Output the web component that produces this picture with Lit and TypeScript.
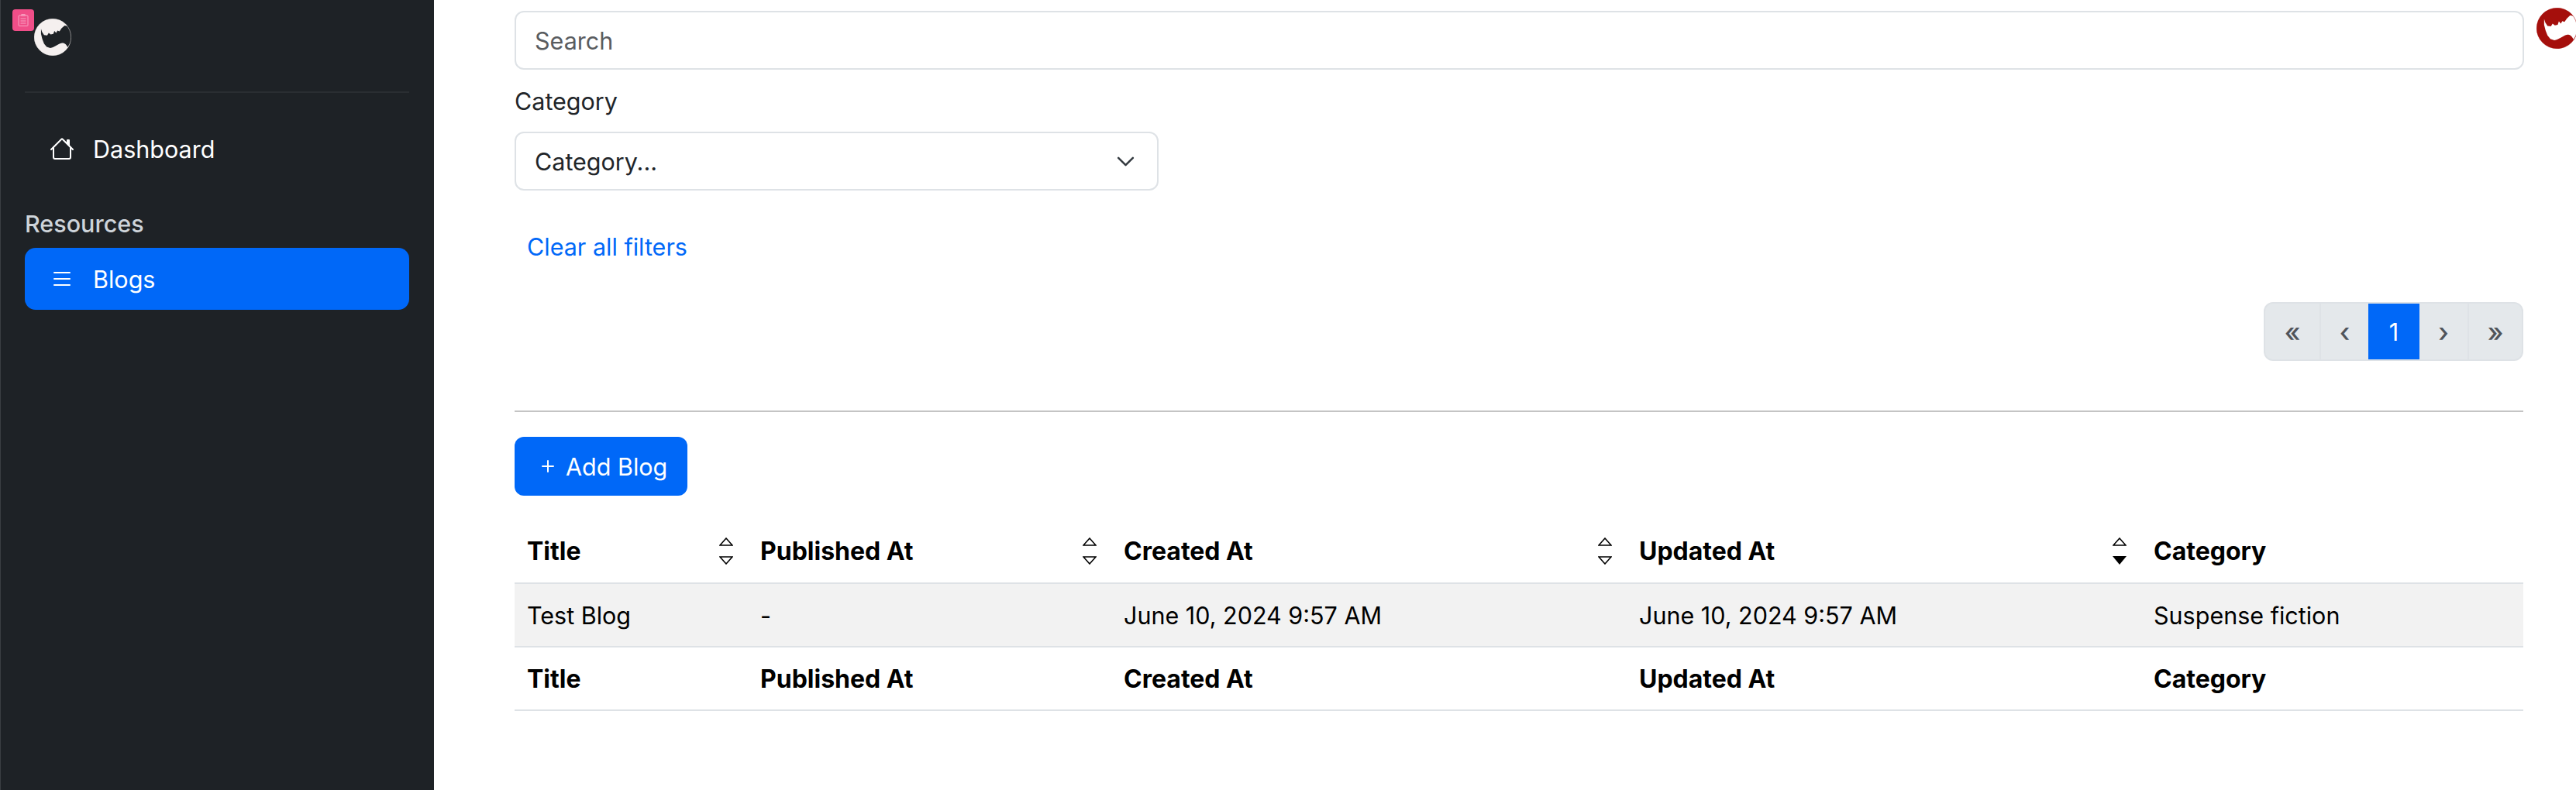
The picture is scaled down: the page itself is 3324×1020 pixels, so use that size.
import { LitElement, html, css, svg } from "lit";
import { customElement } from "lit/decorators.js";

const RHINO =
  "M278 112 L266 100 L252 97 L240 108 L232 120 L224 117 L219 126 L212 118 L208 130 L198 132 L190 126 L184 136 L172 134 L164 122 L160 110 L160 130 L165 150 L172 168 L182 180 L196 185 C214 182 226 168 242 165 C252 165 258 170 264 182 L278 160 Z";

const logo = (bg: string, fg: string, size: number) => html`
  <svg width=${size} height=${size} viewBox="133 70 145 145">
    <circle cx="205.5" cy="142.5" r="72" fill=${bg}></circle>
    <path d=${RHINO} fill=${fg}></path>
    <circle cx="205.5" cy="142.5" r="71.5" fill="none" stroke=${bg} stroke-width="1.5"></circle>
  </svg>
`;

const sortIcon = (active = false) => html`
  <svg class="sort" width="18" height="35" viewBox="0 0 18 35">
    <path d="M9 1 L17 10 H1 Z" fill="none" stroke="#000" stroke-width="1.6"></path>
    ${active
      ? svg`<path d="M0 24 H18 L9 35 Z" fill="#000"></path>`
      : svg`<path d="M9 34 L17 25 H1 Z" fill="none" stroke="#000" stroke-width="1.6"></path>`}
  </svg>
`;

const columns = ["Title", "Published At", "Created At", "Updated At", "Category"];
const row = ["Test Blog", "-", "June 10, 2024 9:57 AM", "June 10, 2024 9:57 AM", "Suspense fiction"];

@customElement("app-root")
export class AppRoot extends LitElement {
  static styles = css`
    :host {
      display: flex;
      height: 1020px;
      overflow: hidden;
      background: #fff;
      color: #212529;
      font-family: Inter, "Liberation Sans", sans-serif;
      font-size: 30.5px;
      line-height: 45px;
    }
    .sidebar {
      position: relative;
      box-sizing: border-box;
      flex: none;
      width: 560px;
      padding: 24px 32px 0 31px;
      background: #1e2226;
      border-left: 1px solid #3a3e42;
      color: #fff;
    }
    .badge {
      position: absolute;
      left: 15px;
      top: 12px;
      display: flex;
      align-items: center;
      justify-content: center;
      width: 28px;
      height: 28px;
      border-radius: 4px;
      background: #f04e88;
    }
    .brand {
      height: 94px;
      margin-left: 12px;
      box-sizing: border-box;
    }
    .brand svg {
      display: block;
    }
    .divider {
      height: 2px;
      background: #2a2e32;
    }
    .nav-item {
      display: flex;
      align-items: center;
      gap: 24px;
      height: 80px;
      padding-left: 32px;
      border-radius: 14px;
    }
    .nav-item svg {
      flex: none;
    }
    .nav-item.home {
      margin-top: 32px;
    }
    .nav-item.active {
      background: #0068f8;
    }
    .section {
      margin-top: 34px;
      margin-bottom: 9px;
      color: #ced4da;
      font-weight: 500;
    }
    .main {
      flex: 1;
      min-width: 0;
      padding: 14px 68px 0 104px;
    }
    .search-row {
      display: flex;
      align-items: flex-start;
    }
    .search {
      flex: 1;
      box-sizing: border-box;
      min-width: 0;
      height: 76px;
      padding: 0 24px;
      border: 2px solid #dee2e6;
      border-radius: 12px;
      outline: none;
      color: #212529;
      font: inherit;
    }
    .search::placeholder {
      color: #595c5f;
      opacity: 1;
    }
    .account {
      flex: none;
      width: 53px;
      height: 53px;
      margin: -4px -70px 0 16px;
    }
    .label {
      margin-top: 18px;
      height: 62px;
    }
    .select {
      display: flex;
      align-items: center;
      justify-content: space-between;
      box-sizing: border-box;
      width: 831px;
      height: 76px;
      padding: 0 28px 0 24px;
      border: 2px solid #dee2e6;
      border-radius: 12px;
    }
    .clear {
      display: block;
      margin-top: 50px;
      padding-left: 16px;
      color: #0068f8;
      text-decoration: none;
    }
    .pager-row {
      display: flex;
      justify-content: flex-end;
      margin-top: 49px;
    }
    .pager {
      display: flex;
      height: 76px;
      border: 2px solid #dee2e6;
      border-radius: 12px;
      background: #e4e8eb;
      box-sizing: border-box;
      overflow: hidden;
      color: #50545a;
      font-size: 34px;
      font-weight: 500;
    }
    .pager span {
      display: flex;
      align-items: center;
      justify-content: center;
      width: 61px;
      border-left: 2px solid #dee2e6;
    }
    .pager span:first-child {
      width: 70px;
      border-left: 0;
    }
    .pager span:last-child {
      width: 68px;
    }
    .pager span.current {
      width: 66px;
      margin: -2px 0;
      border-left: 0;
      background: #0068f8;
      color: #fff;
      font-size: 30.5px;
      font-weight: 400;
    }
    .pager span.current + span {
      width: 62px;
      border-left: 0;
    }
    .rule {
      height: 2px;
      margin: 64px 0 32px;
      background: #c4c4c4;
    }
    .add {
      display: inline-flex;
      align-items: center;
      box-sizing: border-box;
      width: 223px;
      height: 76px;
      padding-left: 27px;
      gap: 7px;
      border-radius: 12px;
      background: #0068f8;
      color: #fff;
      vertical-align: top;
    }
    table {
      table-layout: fixed;
      width: 100%;
      margin-top: 31px;
      border-collapse: collapse;
    }
    th,
    td {
      box-sizing: border-box;
      height: 82px;
      padding: 0 0 0 16px;
      border-bottom: 2px solid #dee2e6;
      color: #000;
      font-weight: 400;
      text-align: left;
    }
    th {
      font-size: 32px;
      font-weight: 700;
    }
    .w1 { width: 301px; }
    .w2 { width: 469px; }
    .w3 { width: 665px; }
    .w4 { width: 664px; }
    .head {
      display: flex;
      align-items: center;
      justify-content: space-between;
      padding-right: 19px;
    }
    .sort {
      flex: none;
    }
    tbody tr {
      background: #f2f2f2;
    }
  `;

  render() {
    return html`
      <aside class="sidebar">
        <div class="badge">
          <svg width="14" height="16" viewBox="0 0 14 16" fill="none" stroke="#f9a3c3" stroke-width="1">
            <rect x="1" y="2" width="12" height="13.5" rx="1"></rect>
            <rect x="5" y="0.5" width="4" height="2"></rect>
            <path d="M3.5 6 H10.5 M3.5 9 H10.5 M3.5 12 H10.5"></path>
          </svg>
        </div>
        <div class="brand">${logo("#f5f0ef", "#1e2226", 48)}</div>
        <div class="divider"></div>
        <div class="nav-item home">
          <svg width="32" height="32" viewBox="0 0 16 16" fill="#fff">
            <path d="M8.707 1.5a1 1 0 0 0-1.414 0L.646 8.146a.5.5 0 0 0 .708.708L2 8.207V13.5A1.5 1.5 0 0 0 3.5 15h9a1.5 1.5 0 0 0 1.5-1.5V8.207l.646.647a.5.5 0 0 0 .708-.708L13 5.793V2.5a.5.5 0 0 0-.5-.5h-1a.5.5 0 0 0-.5.5v1.293L8.707 1.5ZM13 7.207V13.5a.5.5 0 0 1-.5.5h-9a.5.5 0 0 1-.5-.5V7.207l5-5 5 5Z"></path>
          </svg>
          Dashboard
        </div>
        <div class="section">Resources</div>
        <div class="nav-item active">
          <svg width="32" height="32" viewBox="0 0 16 16" fill="#fff">
            <path d="M2.5 12a.5.5 0 0 1 .5-.5h10a.5.5 0 0 1 0 1H3a.5.5 0 0 1-.5-.5zm0-4a.5.5 0 0 1 .5-.5h10a.5.5 0 0 1 0 1H3a.5.5 0 0 1-.5-.5zm0-4a.5.5 0 0 1 .5-.5h10a.5.5 0 0 1 0 1H3a.5.5 0 0 1-.5-.5z"></path>
          </svg>
          Blogs
        </div>
      </aside>
      <main class="main">
        <div class="search-row">
          <input class="search" placeholder="Search" />
          <div class="account">${logo("#a50f0c", "#fff", 53)}</div>
        </div>
        <div class="label">Category</div>
        <div class="select">
          <span>Category...</span>
          <svg width="25" height="25" viewBox="0 0 16 16" fill="none" stroke="#343a40" stroke-width="1.6" stroke-linecap="round" stroke-linejoin="round">
            <path d="m2 5 6 6 6-6"></path>
          </svg>
        </div>
        <a class="clear" href="#">Clear all filters</a>
        <div class="pager-row">
          <div class="pager">
            <span>«</span><span>‹</span><span class="current">1</span><span>›</span><span>»</span>
          </div>
        </div>
        <div class="rule"></div>
        <div class="add">
          <svg width="32" height="32" viewBox="0 0 16 16" fill="#fff">
            <path d="M8 4a.5.5 0 0 1 .5.5v3h3a.5.5 0 0 1 0 1h-3v3a.5.5 0 0 1-1 0v-3h-3a.5.5 0 0 1 0-1h3v-3A.5.5 0 0 1 8 4z"></path>
          </svg>
          Add Blog
        </div>
        <table>
          <thead>
            <tr>
              ${columns.map(
                (c, i) => html`<th class="w${i + 1}">
                  <div class="head">${c}${i < 4 ? sortIcon(i === 3) : ""}</div>
                </th>`
              )}
            </tr>
          </thead>
          <tbody>
            <tr>${row.map((c) => html`<td>${c}</td>`)}</tr>
          </tbody>
          <tfoot>
            <tr>${columns.map((c) => html`<th>${c}</th>`)}</tr>
          </tfoot>
        </table>
      </main>
    `;
  }
}
